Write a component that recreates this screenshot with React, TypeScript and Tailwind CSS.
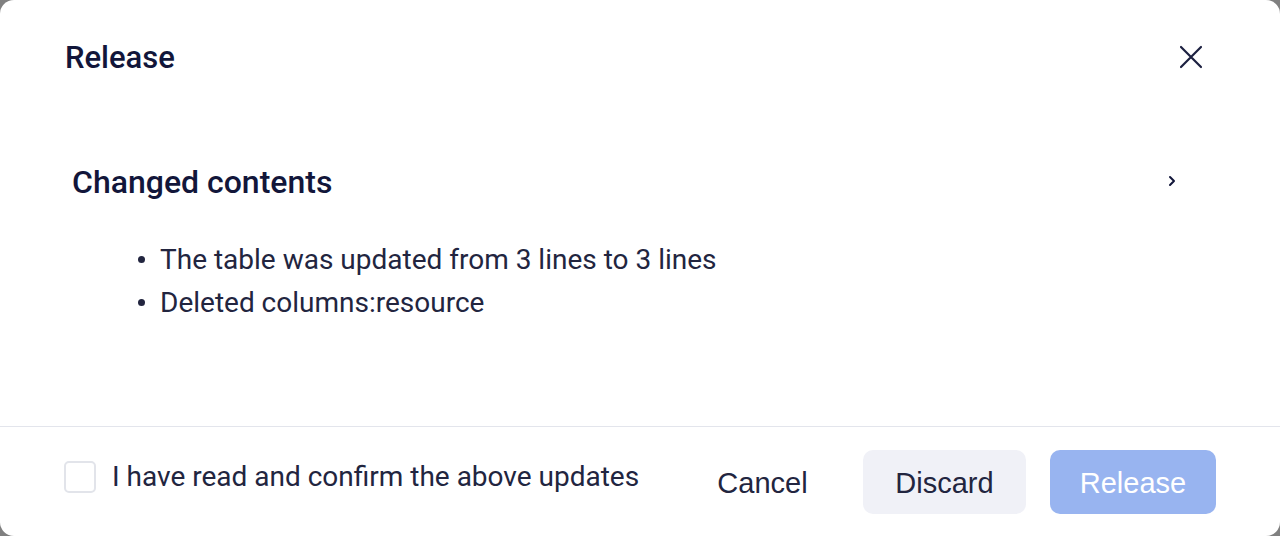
import React from "react";

export default function App() {
  return (
    <div className="w-[1280px] h-[536px] bg-[#808080]">
      <div
        className="w-[1280px] h-[536px] bg-white rounded-[14px] flex flex-col overflow-hidden"
        style={{ fontFamily: "Roboto, 'Noto Sans', sans-serif" }}
      >
        <div className="flex-1 flex flex-col">
          <div className="h-[114px] flex items-center justify-between pl-[65px] pr-[77px]">
            <h1 className="text-[31px] font-medium text-[#12163a] leading-none mt-[1px]">Release</h1>
            <button className="w-[24px] h-[24px] flex items-center justify-center text-[#1c2040]">
              <svg width="24" height="24" viewBox="0 0 24 24" fill="none" stroke="currentColor" strokeWidth="2.2" strokeLinecap="round">
                <path d="M2 2 L22 22 M22 2 L2 22" />
              </svg>
            </button>
          </div>
          <div className="mt-[47px] h-[40px] flex items-center justify-between pl-[72px] pr-[100px]">
            <h2 className="text-[32px] font-medium text-[#12163a] leading-none mt-[1px]">Changed contents</h2>
            <svg width="16" height="16" viewBox="0 0 16 16" fill="none" stroke="#12163a" strokeWidth="2" strokeLinecap="round" strokeLinejoin="round">
              <path d="M6 4 L10 8 L6 12" />
            </svg>
          </div>
          <ul className="mt-[37px] flex flex-col text-[28px] text-[#22253f] leading-[43px]">
            {["The table was updated from 3 lines to 3 lines", "Deleted columns:resource"].map((t) => (
              <li key={t} className="flex items-center pl-[138px] gap-[15px]">
                <span className="w-[7px] h-[7px] rounded-full bg-[#22253f]" />
                <span>{t}</span>
              </li>
            ))}
          </ul>
        </div>
        <div className="border-t border-[#e3e5ec] h-[110px] flex items-center pl-[64px] pr-[64px]">
          <label className="flex items-center gap-[16px] mb-[9px]">
            <span className="w-[32px] h-[32px] rounded-[5px] border-2 border-[#e2e4ea] bg-white" />
            <span className="text-[28px] text-[#22253f]">I have read and confirm the above updates</span>
          </label>
          <div
            className="ml-auto flex items-center gap-[24px] text-[29px]"
            style={{ fontFamily: "'Liberation Sans', Arial, sans-serif" }}
          >
            <button className="w-[153px] h-[64px] rounded-[10px] text-[#22253f] pt-[4px]">Cancel</button>
            <button className="w-[163px] h-[64px] rounded-[10px] bg-[#f0f1f7] text-[#22253f] pt-[4px]">Discard</button>
            <button className="w-[166px] h-[64px] rounded-[10px] bg-[#98b4f0] text-white pt-[4px]">Release</button>
          </div>
        </div>
      </div>
    </div>
  );
}
